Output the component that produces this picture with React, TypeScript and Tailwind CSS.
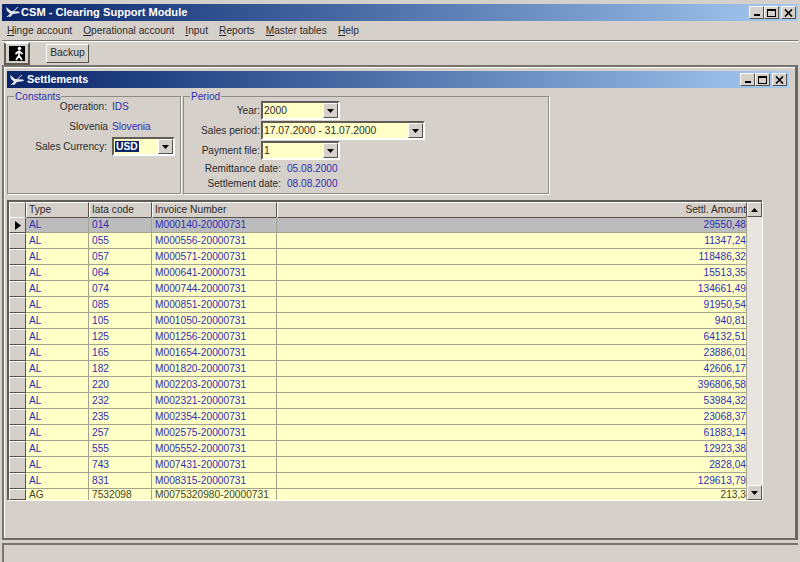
import React from "react";

const rows = [
  ["AL", "014", "M000140-20000731", "29550,48"],
  ["AL", "055", "M000556-20000731", "11347,24"],
  ["AL", "057", "M000571-20000731", "118486,32"],
  ["AL", "064", "M000641-20000731", "15513,35"],
  ["AL", "074", "M000744-20000731", "134661,49"],
  ["AL", "085", "M000851-20000731", "91950,54"],
  ["AL", "105", "M001050-20000731", "940,81"],
  ["AL", "125", "M001256-20000731", "64132,51"],
  ["AL", "165", "M001654-20000731", "23886,01"],
  ["AL", "182", "M001820-20000731", "42606,17"],
  ["AL", "220", "M002203-20000731", "396806,58"],
  ["AL", "232", "M002321-20000731", "53984,32"],
  ["AL", "235", "M002354-20000731", "23068,37"],
  ["AL", "257", "M002575-20000731", "61883,14"],
  ["AL", "555", "M005552-20000731", "12923,38"],
  ["AL", "743", "M007431-20000731", "2828,04"],
  ["AL", "831", "M008315-20000731", "129613,79"],
  ["AG", "7532098", "M0075320980-20000731", "213,3"],
];

const raised =
  "border border-t-white border-l-white border-r-[#55524c] border-b-[#55524c] bg-[#d5d0ca]";
const sunken =
  "border-2 border-t-[#5f5c56] border-l-[#5f5c56] border-r-white border-b-white";
const cellLine = "border-r border-[#a3a392] pl-[3px] whitespace-nowrap";

function AppIcon() {
  return (
    <svg width="16" height="14" viewBox="0 0 16 14" className="shrink-0">
      <path d="M1 2 L6 6 L14 6.5 L15 8 L8 9 L5 12 L3.5 12 L5 8.5 L2 6 Z" fill="#e8e8e8" />
      <path d="M2 12 L13 2" stroke="#e8e8e8" strokeWidth="1" />
    </svg>
  );
}

function WindowButtons() {
  return (
    <div className="flex items-center">
      <div className={`${raised} w-[15px] h-[13px] flex items-end justify-center pb-[2px]`}>
        <div className="w-[6px] h-[2px] bg-black" />
      </div>
      <div className={`${raised} w-[15px] h-[13px] flex items-center justify-center`}>
        <div className="w-[9px] h-[8px] border border-black border-t-2" />
      </div>
      <div className={`${raised} w-[15px] h-[13px] ml-[2px] flex items-center justify-center`}>
        <svg width="9" height="8" viewBox="0 0 9 8">
          <path d="M1 0.5 L8 7.5 M8 0.5 L1 7.5" stroke="black" strokeWidth="1.6" />
        </svg>
      </div>
    </div>
  );
}

function Arrow({ up = false }: { up?: boolean }) {
  return (
    <svg width="7" height="4" viewBox="0 0 7 4">
      <path d={up ? "M3.5 0 L7 4 L0 4 Z" : "M0 0 L7 0 L3.5 4 Z"} fill="black" />
    </svg>
  );
}

function Combo({ value, width, selected }: { value: string; width: string; selected?: boolean }) {
  return (
    <div className={`${sunken} ${width} h-[19px] flex bg-[#ffffc8]`}>
      <div className="flex-1 pl-[1px] leading-[15px] text-[#2c2c2c] whitespace-nowrap text-[10.3px]">
        {selected ? <span className="bg-[#0a246a] text-white font-bold px-[1px]">{value}</span> : value}
      </div>
      <div className={`${raised} w-[15px] flex items-center justify-center`}>
        <Arrow />
      </div>
    </div>
  );
}

function Group({ title, className, children }: { title: string; className: string; children: React.ReactNode }) {
  return (
    <fieldset className={`border border-[#8f8c86] shadow-[1px_1px_0_#fff] ${className}`}>
      <legend className="ml-[6px] px-[1px] text-[#2f2fb4] leading-[11px]">{title}</legend>
      {children}
    </fieldset>
  );
}

function U({ first, rest }: { first: string; rest: string }) {
  return (
    <span>
      <span className="underline">{first}</span>
      {rest}
    </span>
  );
}

export default function App() {
  return (
    <div className="w-[800px] h-[562px] overflow-hidden bg-[#d5d0ca] text-[10.1px] text-[#2c2c2c] font-['Liberation_Sans',Arial,sans-serif] pt-[4px]">
      {/* main title */}
      <div className="h-[17px] mx-[2px] pl-[3px] pr-[2px] flex items-center justify-between bg-gradient-to-r from-[#0a246a] to-[#a6caf0]">
        <div className="flex items-center text-white font-bold text-[11.1px]">
          <AppIcon />
          <span>CSM - Clearing Support Module</span>
        </div>
        <WindowButtons />
      </div>

      {/* menu */}
      <div className="h-[19px] pl-[7px] flex items-center gap-[11px] text-[10.2px]">
        <U first="H" rest="inge account" />
        <U first="O" rest="perational account" />
        <U first="I" rest="nput" />
        <U first="R" rest="eports" />
        <U first="M" rest="aster tables" />
        <U first="H" rest="elp" />
      </div>

      {/* toolbar */}
      <div className="h-[25px] mx-[2px] border-t border-[#77746e] shadow-[inset_0_1px_0_#fff] flex items-center">
        <div className="ml-[2px] w-[26px] h-[23px] border-2 border-t-white border-l-[#5f5c56] border-r-[#5f5c56] border-b-[#5f5c56] flex items-center justify-center">
          <svg width="16" height="15" viewBox="0 0 16 15">
            <rect x="0" y="0" width="16" height="15" fill="black" />
            <circle cx="10.5" cy="2.5" r="1.8" fill="white" />
            <path d="M10 5 L6.5 8 M10 5 L13.5 8 M10 5 L10 9.5 L7 14 M10 9.5 L13 14" stroke="white" strokeWidth="1.7" fill="none" />
          </svg>
        </div>
        <div className={`${raised} ml-[16px] w-[43px] h-[19px] flex items-center justify-center text-[10.4px]`}>Backup</div>
      </div>

      {/* mdi area */}
      <div className="h-[475px] mx-[2px] border-t-2 border-b-2 border-l-2 border-r-[3px] border-t-[#77746e] border-l-[#77746e] border-r-[#6b6862] border-b-[#6b6862] pl-[3px] pr-[3px] pt-[4px] shadow-[inset_1px_1px_0_#fff]">
        {/* child title */}
        <div className="h-[17px] mr-[3px] pl-[2px] pr-[2px] flex items-center justify-between bg-gradient-to-r from-[#0a246a] to-[#a6caf0]">
          <div className="flex items-center gap-[2px] text-white font-bold text-[10.8px]">
            <AppIcon />
            <span>Settlements</span>
          </div>
          <WindowButtons />
        </div>

        {/* filter groups */}
        <div className="flex gap-[2px] mt-[3px] h-[103px]">
          <Group title="Constants" className="w-[174px] h-[103px]">
            <div className="flex flex-col -mt-[5px]">
              <div className="flex h-[20px] items-center">
                <span className="w-[99px] text-right">Operation:</span>
                <span className="ml-[5px] text-[#2f2fb4]">IDS</span>
              </div>
              <div className="flex h-[20px] items-center">
                <span className="w-[100px] text-right">Slovenia</span>
                <span className="ml-[4px] text-[#2f2fb4]">Slovenia</span>
              </div>
              <div className="flex items-center">
                <span className="w-[99px] text-right">Sales Currency:</span>
                <div className="ml-[5px]">
                  <Combo value="USD" width="w-[63px]" selected />
                </div>
              </div>
            </div>
          </Group>
          <Group title="Period" className="w-[366px] h-[103px]">
            <div className="flex flex-col gap-[1px] -mt-[1px]">
              <div className="flex items-center">
                <span className="w-[76px] text-right">Year:</span>
                <div className="ml-[1px]">
                  <Combo value="2000" width="w-[79px]" />
                </div>
              </div>
              <div className="flex items-center">
                <span className="w-[76px] text-right">Sales period:</span>
                <div className="ml-[1px]">
                  <Combo value="17.07.2000 - 31.07.2000" width="w-[164px]" />
                </div>
              </div>
              <div className="flex items-center">
                <span className="w-[76px] text-right">Payment file:</span>
                <div className="ml-[1px]">
                  <Combo value="1" width="w-[79px]" />
                </div>
              </div>
              <div className="flex items-center h-[14px] mt-[1px]">
                <span className="w-[97px] text-right">Remittance date:</span>
                <span className="ml-[6px] text-[#2f2fb4]">05.08.2000</span>
              </div>
              <div className="flex items-center h-[14px]">
                <span className="w-[97px] text-right">Settlement date:</span>
                <span className="ml-[6px] text-[#2f2fb4]">08.08.2000</span>
              </div>
            </div>
          </Group>
        </div>

        {/* grid */}
        <div className="mt-[6px] w-[755px] h-[300px] flex border-t-2 border-l-2 border-t-[#5f5c56] border-l-[#5f5c56] shadow-[1px_1px_0_#fff] text-[10.2px]">
          <div className="flex-1 h-full overflow-hidden">
            <div className="grid grid-cols-[17px_63px_63px_125px_1fr] h-[15px] leading-[14px]">
              <div className={raised} />
              <div className={`${raised} pl-[2px]`}>Type</div>
              <div className={`${raised} pl-[2px]`}>Iata code</div>
              <div className={`${raised} pl-[2px]`}>Invoice Number</div>
              <div className={`${raised} text-right`}>Settl. Amount</div>
            </div>
            {rows.map((r, i) => {
              const last = i === rows.length - 1;
              return (
                <div
                  key={r[2]}
                  className={`grid grid-cols-[17px_63px_63px_125px_1fr] ${
                    last ? "h-[11px] leading-[11px] text-[#44442c]" : "h-[16px] leading-[15px] text-[#2f2fb4]"
                  } ${i === 0 ? "bg-[#bcbcbc]" : "bg-[#ffffc8]"}`}
                >
                  <div className={`${raised} flex items-center justify-center border-r-[#2c2a26] border-b-[#2c2a26]`}>
                    {i === 0 && (
                      <svg width="6" height="9" viewBox="0 0 6 9">
                        <path d="M0 0 L6 4.5 L0 9 Z" fill="black" />
                      </svg>
                    )}
                  </div>
                  <div className={`${cellLine} ${last ? "" : "border-b"}`}>{r[0]}</div>
                  <div className={`${cellLine} ${last ? "" : "border-b"}`}>{r[1]}</div>
                  <div className={`${cellLine} ${last ? "" : "border-b"}`}>{r[2]}</div>
                  <div className={`${cellLine} ${last ? "" : "border-b"} text-right`}>{r[3]}</div>
                </div>
              );
            })}
          </div>
          <div className="w-[15px] h-full flex flex-col justify-between bg-[#e8e5e1]">
            <div className={`${raised} h-[15px] flex items-center justify-center`}>
              <Arrow up />
            </div>
            <div className={`${raised} h-[15px] flex items-center justify-center`}>
              <Arrow />
            </div>
          </div>
        </div>
      </div>

      {/* status bar */}
      <div className="h-[19px] mt-[3px] mx-[2px] border-t-2 border-l-2 border-t-[#77746e] border-l-[#77746e]" />
    </div>
  );
}
